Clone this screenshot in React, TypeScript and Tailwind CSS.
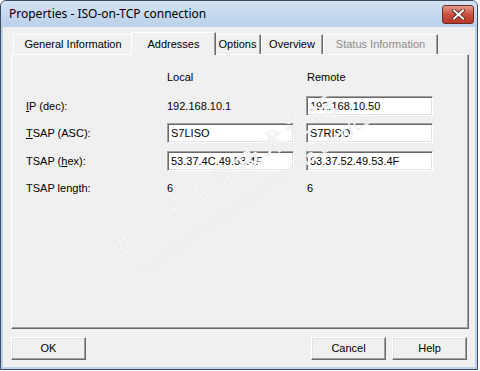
import React from "react";

const ui = { fontFamily: '"Liberation Sans", Arial, sans-serif' };

function Tab({ label, w, selected, disabled }: { label: string; w: number; selected?: boolean; disabled?: boolean }) {
  if (selected) {
    return (
      <div
        className="relative z-10 -mx-[2px] -mb-[1px] h-[23px] flex items-start justify-center pt-[3px] bg-[#f0f0f0] border-t border-l border-white border-r border-r-[#696969] shadow-[inset_-1px_0_0_#a0a0a0]"
        style={{ width: w + 4 }}
      >
        {label}
      </div>
    );
  }
  return (
    <div
      className={`h-[20px] flex items-center justify-center bg-[#f0f0f0] border-t border-l border-white border-r border-r-[#696969] shadow-[inset_-1px_0_0_#a0a0a0] ${
        disabled ? "text-[#8d8d8d]" : "text-black"
      }`}
      style={{ width: w }}
    >
      {label}
    </div>
  );
}

function Field({ value }: { value: string }) {
  return (
    <div className="w-[127px] h-[20px] bg-white border border-t-[#a0a0a0] border-l-[#a0a0a0] border-r-white border-b-white shadow-[inset_1px_1px_0_#696969,inset_-1px_-1px_0_#e3e3e3] flex items-center pl-[3px]">
      {value}
    </div>
  );
}

function Btn({ label }: { label: string }) {
  return (
    <button className="w-[75px] h-[23px] bg-[#f0f0f0] border border-t-white border-l-white border-r-[#696969] border-b-[#696969] shadow-[inset_-1px_-1px_0_#a0a0a0,inset_1px_1px_0_#e3e3e3] flex items-center justify-center text-black">
      {label}
    </button>
  );
}

function Row({ label, local, remote, className = "" }: { label: React.ReactNode; local: React.ReactNode; remote: React.ReactNode; className?: string }) {
  return (
    <div className={`flex items-center h-[20px] ${className}`}>
      <div className="w-[141px]">{label}</div>
      <div className="w-[139px]">{local}</div>
      <div className="w-[127px]">{remote}</div>
    </div>
  );
}

export default function App() {
  return (
    <div className="w-[480px] h-[371px] bg-white text-[11px] text-black" style={ui}>
      <div className="w-[478px] h-[370px] border border-[#3d4b5e] rounded-t-[6px] bg-[#bcd2ea] flex flex-col overflow-hidden">
        {/* title bar */}
        <div className="h-[26px] shrink-0 flex items-center pl-[8px] pr-[3px] bg-gradient-to-b from-[#d3e2f3] to-[#b9d1ea]">
          <span className="text-[12px] text-black" style={{ fontFamily: '"Noto Sans", "Open Sans", sans-serif' }}>
            Properties - ISO-on-TCP connection
          </span>
          <div className="ml-auto w-[32px] h-[19px] rounded-[3px] border border-[#6b2a22] bg-gradient-to-b from-[#e09a8c] via-[#c9503f] to-[#b7362a] flex items-center justify-center">
            <svg width="13" height="11" viewBox="0 0 13 11">
              <path d="M2 1.5 L11 9.5 M11 1.5 L2 9.5" stroke="#4a1a14" strokeWidth="3.6" strokeLinecap="square" />
              <path d="M2 1.5 L11 9.5 M11 1.5 L2 9.5" stroke="#ffffff" strokeWidth="2" strokeLinecap="square" />
            </svg>
          </div>
        </div>

        {/* client area */}
        <div className="flex-1 mx-[2px] mb-[2px] bg-[#f0f0f0] flex flex-col px-[8px] pt-[5px] pb-[6px]">
          <div className="flex items-end h-[22px] pl-[2px]">
            <Tab label="General Information" w={120} />
            <Tab label="Addresses" w={81} selected />
            <Tab label="Options" w={47} />
            <Tab label="Overview" w={62} />
            <Tab label="Status Information" w={115} disabled />
          </div>

          <div className="relative w-[458px] h-[275px] border-t border-l border-white border-r border-b border-r-[#696969] border-b-[#696969] shadow-[inset_-1px_-1px_0_#a0a0a0] pl-[14px] pt-[12px] overflow-hidden">
            <div className="flex flex-col">
              <Row label="" local="Local" remote={<span className="pl-[1px]">Remote</span>} />
              <Row className="mt-[9px]" label={<span><u>I</u>P (dec):</span>} local="192.168.10.1" remote={<Field value="192.168.10.50" />} />
              <Row className="mt-[7px]" label={<span><u>T</u>SAP (ASC):</span>} local={<Field value="S7LISO" />} remote={<Field value="S7RISO" />} />
              <Row className="mt-[8px]" label={<span>TSAP (<u>h</u>ex):</span>} local={<Field value="53.37.4C.49.53.4F" />} remote={<Field value="53.37.52.49.53.4F" />} />
              <Row className="mt-[7px]" label="TSAP length:" local="6" remote={<span className="pl-[1px]">6</span>} />
            </div>

            {/* watermark */}
            <div className="absolute left-[108px] top-[172px] pointer-events-none -rotate-[34deg] origin-left flex flex-col">
              <span
                className="text-[26px] tracking-[4px] text-[#f5f5f5] [text-shadow:0_0_1px_#d8d8d8]"
                style={{ fontFamily: '"Noto Sans CJK SC", sans-serif' }}
              >
                西门子工业技术论坛
              </span>
              <span className="mt-[2px] pl-[10px] text-[17px] tracking-[1px] text-[#f5f5f5] [text-shadow:0_0_1px_#d8d8d8]">
                support.industry.siemens.com/cs
              </span>
            </div>
          </div>

          <div className="flex mt-[8px]">
            <Btn label="OK" />
            <div className="ml-auto flex gap-[6px]">
              <Btn label="Cancel" />
              <Btn label="Help" />
            </div>
          </div>
        </div>
      </div>
    </div>
  );
}
